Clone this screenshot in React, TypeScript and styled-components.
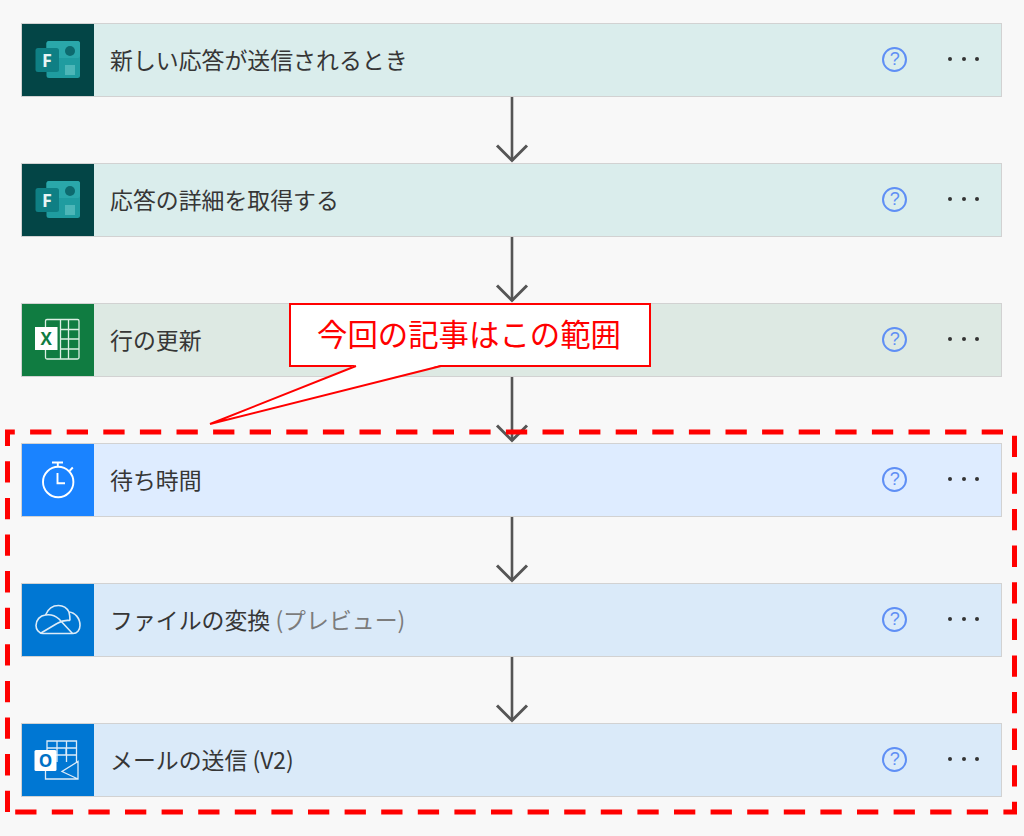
import React from 'react';
import styled, { createGlobalStyle } from 'styled-components';

const GlobalStyle = createGlobalStyle`
  html, body {
    margin: 0;
    padding: 0;
    background: #f8f8f8;
  }
`;

const Page = styled.div`
  position: relative;
  width: 1024px;
  height: 836px;
  box-sizing: border-box;
  padding: 23px 22px 0 21px;
  overflow: hidden;
  background: #f8f8f8;
  font-family: "Noto Sans", "Noto Sans CJK JP", sans-serif;
`;

const Flow = styled.div`
  display: flex;
  flex-direction: column;
`;

const Card = styled.div<{ $bg: string }>`
  display: flex;
  align-items: stretch;
  height: 74px;
  box-sizing: border-box;
  border: 1px solid #d2d2d2;
  border-width: 1px 1.5px 1.5px 1px;
  background: ${(p) => p.$bg};
`;

const IconCell = styled.div<{ $bg: string }>`
  flex: 0 0 72px;
  background: ${(p) => p.$bg};
  svg {
    display: block;
  }
`;

const Label = styled.div`
  flex: 1;
  display: flex;
  align-items: center;
  padding: 0 0 3px 16px;
  font-family: "Noto Sans CJK JP", sans-serif;
  font-size: 22.9px;
  font-weight: 400;
  color: #363636;
  white-space: pre;
`;

const Muted = styled.span`
  color: #7c7c7c;
`;

const Actions = styled.div`
  display: flex;
  align-items: center;
  gap: 41px;
  padding: 0 22px 2px 0;
`;

const HelpBadge = styled.span`
  display: flex;
  align-items: center;
  justify-content: center;
  width: 25px;
  height: 25px;
  box-sizing: border-box;
  border: 2px solid #5f8ff5;
  border-radius: 50%;
  font-family: "Liberation Sans", sans-serif;
  font-size: 18px;
  line-height: 1;
  color: #5f8ff5;
`;

const Dots = styled.span`
  display: flex;
  gap: 9.4px;
`;

const Dot = styled.i`
  display: block;
  width: 4px;
  height: 4px;
  border-radius: 50%;
  background: #333;
`;

const Connector = styled.div`
  display: flex;
  justify-content: center;
  height: 66px;
  svg {
    display: block;
  }
`;

const Frame = styled.svg`
  position: absolute;
  left: 0;
  top: 0;
`;

const Callout = styled.div`
  position: absolute;
  left: 289px;
  top: 303px;
  width: 362px;
  height: 64px;
  box-sizing: border-box;
  border: 2px solid #ff0000;
  background: #fff;
  display: flex;
  align-items: center;
  justify-content: center;
  padding: 0 2px 4px 0;
  font-family: "Noto Sans CJK JP", sans-serif;
  font-size: 30.4px;
  color: #ff0000;
  white-space: nowrap;
`;

const CalloutTail = styled.svg`
  position: absolute;
  left: -83px;
  top: 59px;
`;

const FormsIcon = () => (
  <svg width="72" height="72" viewBox="0 0 72 72">
    <rect x="24.5" y="17" width="33.5" height="37" rx="2.5" fill="#1f9ca0" />
    <rect x="24.5" y="17" width="33.5" height="17" rx="2.5" fill="#2aa7aa" />
    <circle cx="48" cy="27" r="5" fill="#0d6a6e" />
    <rect x="43" y="41" width="10" height="10" fill="#4cb6b8" />
    <rect x="13.5" y="24" width="23.5" height="24" rx="2.5" fill="#0f7f84" />
    <text x="25" y="43" textAnchor="middle" fontFamily="'Open Sans', sans-serif" fontSize="18" fontWeight="700" fill="#e8f5f5">F</text>
  </svg>
);

const ExcelIcon = () => (
  <svg width="72" height="72" viewBox="0 0 72 72" fill="none" stroke="#dcefe4" strokeWidth="1.3">
    <rect x="23.5" y="15.5" width="33.5" height="39.5" rx="1.5" />
    <path d="M38.5 15.5V55M46.5 15.5V55M38.5 25.5H57M38.5 35H57M38.5 45H57" />
    <rect x="13" y="23" width="22.5" height="23" fill="#fff" stroke="none" />
    <text x="24.2" y="41" textAnchor="middle" fontFamily="'Open Sans', sans-serif" fontSize="17" fontWeight="700" fill="#107c41" stroke="none">X</text>
  </svg>
);

const TimerIcon = () => (
  <svg width="72" height="72" viewBox="0 0 72 72" fill="none" stroke="#fff" strokeWidth="1.9">
    <circle cx="36.2" cy="38" r="15.2" />
    <path d="M30 18.5H41M35.8 18.5V22.5M47.5 27L50.8 23.5M35.5 29V39.2H43" />
  </svg>
);

const OneDriveIcon = () => (
  <svg width="72" height="72" viewBox="0 0 72 72" fill="none" stroke="#dcebf8" strokeWidth="1.6" strokeLinejoin="round">
    <path d="M21 49.5C16.5 49.5 14 45 14 41.5C14 36 18 31.5 23.5 31C26 25 31 21.5 36.5 21.5C41 21.5 45 24 47 28C53 28.5 58 34 58 41.5C58 46 55 49.5 51 49.5Z" />
    <path d="M23.5 31C29 30 33 31.5 37 35L50.5 49.5M19 49L35 39.5C39 37 44 36 48 36.5M47 28C47.5 30 48 33 48 36.5" />
  </svg>
);

const OutlookIcon = () => (
  <svg width="72" height="72" viewBox="0 0 72 72" fill="none" stroke="#dcebf8" strokeWidth="1.3">
    <path d="M25 40V17H54.5V38M25 24H54.5M35 17V38M44.5 17V38M34 31H54.5M44 24V31" />
    <path d="M23.5 47V55H56V37.5L40 47.5L56 55" />
    <rect x="12.5" y="26" width="22" height="21" rx="1.5" fill="#fff" stroke="none" />
    <text x="23.5" y="42.5" textAnchor="middle" fontFamily="'Open Sans', sans-serif" fontSize="17" fontWeight="700" fill="#0072c6" stroke="none">O</text>
  </svg>
);

const steps = [
  { title: '新しい応答が送信されるとき', bg: '#daedec', iconBg: '#034546', icon: <FormsIcon /> },
  { title: '応答の詳細を取得する', bg: '#daedec', iconBg: '#034546', icon: <FormsIcon /> },
  { title: '行の更新', bg: '#dde9e3', iconBg: '#107c41', icon: <ExcelIcon /> },
  { title: '待ち時間', bg: '#deecff', iconBg: '#1a83ff', icon: <TimerIcon /> },
  { title: 'ファイルの変換 ', note: '(プレビュー)', bg: '#daeaf9', iconBg: '#0077d3', icon: <OneDriveIcon /> },
  { title: 'メールの送信 (V2)', bg: '#daeaf9', iconBg: '#0077d3', icon: <OutlookIcon /> },
];

const Arrow = () => (
  <svg width="36" height="66" viewBox="0 0 36 66" fill="none" stroke="#555" strokeWidth="2.6">
    <path d="M18 0V64" />
    <path d="M3 48.5L18 63.5L33 48.5" strokeWidth="3" />
  </svg>
);

const App: React.FC = () => (
  <Page>
    <GlobalStyle />
    <Flow>
      {steps.map((step, i) => (
        <React.Fragment key={step.title}>
          {i > 0 && (
            <Connector>
              <Arrow />
            </Connector>
          )}
          <Card $bg={step.bg}>
            <IconCell $bg={step.iconBg}>{step.icon}</IconCell>
            <Label>
              {step.title}
              {step.note && <Muted>{step.note}</Muted>}
            </Label>
            <Actions>
              <HelpBadge>?</HelpBadge>
              <Dots>
                <Dot />
                <Dot />
                <Dot />
              </Dots>
            </Actions>
          </Card>
        </React.Fragment>
      ))}
    </Flow>
    <Frame width="1024" height="836" viewBox="0 0 1024 836" fill="none">
      <path
        d="M7.5 812V432H1014.5V812H7.5"
        stroke="#ff0000"
        strokeWidth="5"
        strokeDasharray="21.3 15.3"
      />
    </Frame>
    <Callout>
      今回の記事はこの範囲
      <CalloutTail width="240" height="62" viewBox="0 0 240 62">
        <path d="M2 60L148 1H233Z" fill="#fff" />
        <path d="M148 2L2 60L233 2" fill="none" stroke="#ff0000" strokeWidth="2" />
      </CalloutTail>
    </Callout>
  </Page>
);

export default App;
